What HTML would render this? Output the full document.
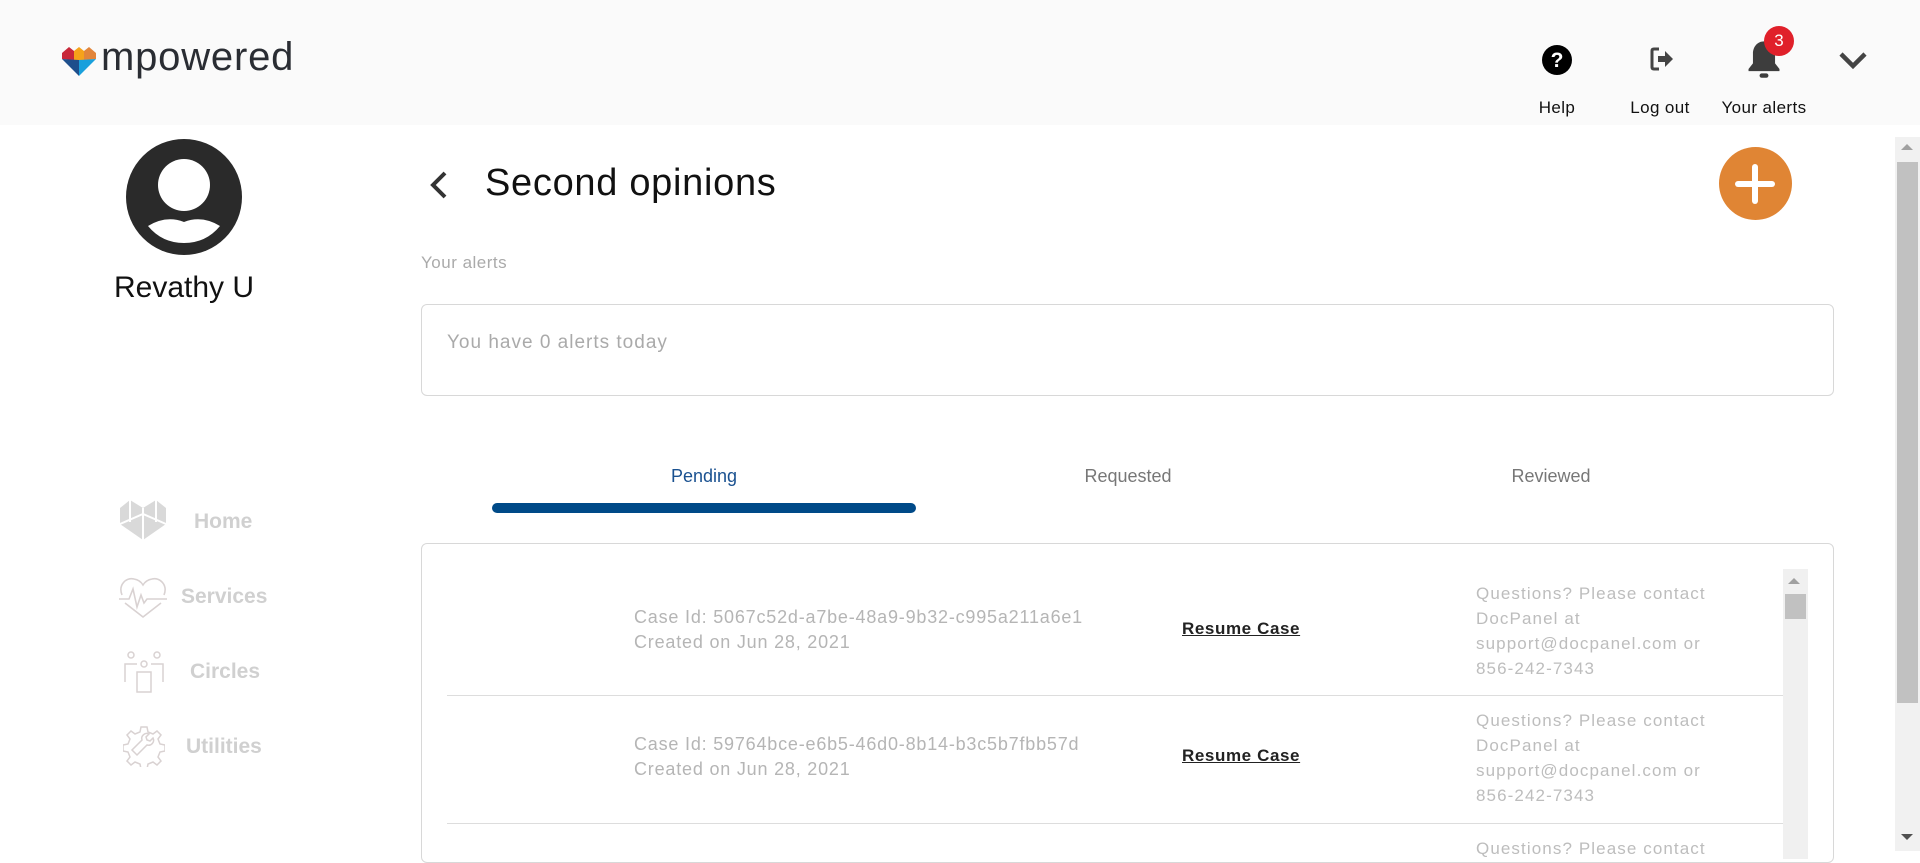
<!DOCTYPE html>
<html><head><meta charset="utf-8"><style>
*{margin:0;padding:0;box-sizing:border-box}
body{width:1920px;height:851px;overflow:hidden;background:#fff;font-family:"Liberation Sans",sans-serif;position:relative}
.abs{position:absolute}
header{position:absolute;left:0;top:0;width:1920px;height:125px;background:#fafafa}
.hl{position:absolute;top:98px;font-size:17px;color:#111;transform:translateX(-50%);letter-spacing:0.4px}
.nav{position:absolute;font-size:21px;font-weight:bold;color:#d0d0d0}
.case{position:absolute;left:634px;font-size:18px;color:#b5b5b5;line-height:25px;letter-spacing:0.8px}
.res{position:absolute;left:1182px;font-size:17px;font-weight:bold;color:#222;text-decoration:underline;letter-spacing:0.6px}
.q{position:absolute;left:1476px;font-size:17px;color:#bdbdbd;line-height:25px;letter-spacing:1.1px}
.div{position:absolute;left:447px;width:1336px;height:1px;background:#ddd}
</style></head><body>
<header>
<svg class="abs" style="left:62px;top:47px" width="34" height="30" viewBox="0 0 34 30">
<polygon points="0,6 7,0 12,4 12,13 0,12" fill="#c8283a"/>
<polygon points="12,4 17,0 22,4 22,13 12,13" fill="#f6a21a"/>
<polygon points="22,4 27,0 34,6 34,12 22,13" fill="#e2853a"/>
<polygon points="0,12 17,13 17,29" fill="#1e4f8c"/>
<polygon points="17,13 34,12 17,29" fill="#1aa0dc"/>
</svg>
<div class="abs" style="left:101px;top:35px;font-size:40px;color:#2a2d33;letter-spacing:0.8px;font-weight:500">mpowered</div>
<svg class="abs" style="left:1541px;top:44px" width="32" height="32" viewBox="0 0 32 32"><circle cx="16" cy="16" r="15" fill="#000"/><text x="16" y="23" text-anchor="middle" font-family="Liberation Sans" font-weight="bold" font-size="21" fill="#fff">?</text></svg>
<div class="hl" style="left:1557px">Help</div>
<svg class="abs" style="left:1649px;top:46px" width="26" height="26" viewBox="0 0 26 26"><path d="M10 3H5Q3 3 3 5v16q0 2 2 2h5" stroke="#444" stroke-width="3" fill="none"/><path d="M9 10h7V5l8 8-8 8v-5H9z" fill="#444"/></svg>
<div class="hl" style="left:1660px">Log out</div>
<svg class="abs" style="left:1746px;top:38px" width="36" height="42" viewBox="0 0 32 38"><path d="M16 3c-6 0-10 5-10 11v9l-4 5v2h28v-2l-4-5v-9C26 8 22 3 16 3z" fill="#3d3d3d"/><rect x="12" y="32" width="8" height="4" rx="2" fill="#3d3d3d"/></svg>
<div class="abs" style="left:1764px;top:26px;width:30px;height:30px;border-radius:50%;background:#e0202a;color:#fff;font-size:17px;text-align:center;line-height:30px">3</div>
<div class="hl" style="left:1764px">Your alerts</div>
<svg class="abs" style="left:1838px;top:50px" width="30" height="20" viewBox="0 0 30 20"><path d="M3 4l12 12L27 4" stroke="#444" stroke-width="4.5" fill="none"/></svg>
</header>

<svg class="abs" style="left:126px;top:139px" width="116" height="116" viewBox="0 0 116 116"><circle cx="58" cy="58" r="58" fill="#2a2a2a"/><circle cx="58" cy="46" r="26" fill="#fff"/><path d="M22 87Q40 76 58 83Q76 76 94 87Q80 104 58 104Q36 104 22 87z" fill="#fff"/></svg>
<div class="abs" style="left:84px;top:271px;width:200px;text-align:center;font-size:30px;color:#111">Revathy U</div>

<svg class="abs" style="left:118px;top:498px" width="50" height="44" viewBox="0 0 50 44"><path d="M2 10L12 2 25 10 38 2 48 10V26L25 42 2 26z" fill="#d9d9d9"/><path d="M25 10V42M12 2V24M38 2V24M2 26l23-10 23 10" stroke="#fff" stroke-width="2" fill="none"/></svg>
<div class="nav" style="left:194px;top:510px">Home</div>
<svg class="abs" style="left:118px;top:575px" width="50" height="44" viewBox="0 0 50 44"><path d="M4 20C0 10 8 2 16 4q6 1 9 6 3-5 9-6c8-2 16 6 12 16" stroke="#d9d2d2" stroke-width="1.6" fill="none"/><path d="M1 24h10l4-10 4 18 4-12 3 8 3-4h20" stroke="#d9d2d2" stroke-width="1.6" fill="none"/><path d="M7 28l18 14 18-14" stroke="#d9d2d2" stroke-width="1.6" fill="none"/></svg>
<div class="nav" style="left:181px;top:585px">Services</div>
<svg class="abs" style="left:122px;top:650px" width="44" height="44" viewBox="0 0 44 44"><g stroke="#d9d2d2" stroke-width="1.5" fill="none"><circle cx="9" cy="5" r="3"/><circle cx="35" cy="5" r="3"/><circle cx="22" cy="14" r="3"/><path d="M3 32V14h12M41 32V14H29M15 42V22h14v20z"/></g></svg>
<div class="nav" style="left:190px;top:660px">Circles</div>
<svg class="abs" style="left:123px;top:725px" width="42" height="42" viewBox="0 0 42 42"><g stroke="#d9d2d2" stroke-width="1.5" fill="none"><path d="M18 2h6l1 5 5 2 4-3 4 4-3 4 2 5 5 1v6l-5 1-2 5 3 4-4 4-4-3-5 2-1 5h-6l-1-5-5-2-4 3-4-4 3-4-2-5-5-1v-6l5-1 2-5-3-4 4-4 4 3 5-2z"/><path d="M14 30l10-10a5 5 0 0 0 6-7l-3 3-3-1-1-3 3-3a5 5 0 0 0-7 6L9 25z"/></g></svg>
<div class="nav" style="left:186px;top:735px">Utilities</div>

<svg class="abs" style="left:426px;top:170px" width="26" height="30" viewBox="0 0 26 30"><path d="M19 3L7 15l12 12" stroke="#333" stroke-width="4" fill="none"/></svg>
<div class="abs" style="left:485px;top:162px;font-size:38px;font-weight:500;color:#111;letter-spacing:0.7px">Second opinions</div>
<div class="abs" style="left:1719px;top:147px;width:73px;height:73px;border-radius:50%;background:#e08534"></div>
<div class="abs" style="left:1735px;top:181px;width:40px;height:6px;border-radius:3px;background:#fff"></div>
<div class="abs" style="left:1752px;top:164px;width:6px;height:40px;border-radius:3px;background:#fff"></div>

<div class="abs" style="left:421px;top:253px;font-size:17px;color:#aaa;letter-spacing:0.5px">Your alerts</div>
<div class="abs" style="left:421px;top:304px;width:1413px;height:92px;border:1px solid #d8d8d8;border-radius:6px"></div>
<div class="abs" style="left:447px;top:332px;font-size:19px;color:#aaa;letter-spacing:1px">You have 0 alerts today</div>

<div class="abs" style="left:604px;top:466px;width:200px;text-align:center;font-size:18px;color:#1a5190">Pending</div>
<div class="abs" style="left:1028px;top:466px;width:200px;text-align:center;font-size:18px;color:#777">Requested</div>
<div class="abs" style="left:1451px;top:466px;width:200px;text-align:center;font-size:18px;color:#777">Reviewed</div>
<div class="abs" style="left:492px;top:503px;width:424px;height:10px;border-radius:5px;background:#004a88"></div>

<div class="abs" style="left:421px;top:543px;width:1413px;height:320px;border:1px solid #d8d8d8;border-radius:6px"></div>
<div class="abs" style="left:1783px;top:569px;width:25px;height:290px;background:#f0f0f0"></div>
<div class="abs" style="left:1788px;top:578px;width:0;height:0;border-left:6px solid transparent;border-right:6px solid transparent;border-bottom:6px solid #a0a0a0"></div>
<div class="abs" style="left:1785px;top:594px;width:21px;height:25px;background:#c1c1c1"></div>

<div class="case" style="top:605px">Case Id: 5067c52d-a7be-48a9-9b32-c995a211a6e1<br>Created on Jun 28, 2021</div>
<div class="res" style="top:619px">Resume Case</div>
<div class="q" style="top:581px">Questions? Please contact<br>DocPanel at<br>support@docpanel.com or<br>856-242-7343</div>
<div class="div" style="top:695px"></div>
<div class="case" style="top:732px">Case Id: 59764bce-e6b5-46d0-8b14-b3c5b7fbb57d<br>Created on Jun 28, 2021</div>
<div class="res" style="top:746px">Resume Case</div>
<div class="q" style="top:708px">Questions? Please contact<br>DocPanel at<br>support@docpanel.com or<br>856-242-7343</div>
<div class="div" style="top:823px"></div>
<div class="q" style="top:836px">Questions? Please contact</div>

<div class="abs" style="left:1895px;top:137px;width:25px;height:714px;background:#f1f1f1"></div>
<div class="abs" style="left:1901px;top:144px;width:0;height:0;border-left:6px solid transparent;border-right:6px solid transparent;border-bottom:6px solid #a0a0a0"></div>
<div class="abs" style="left:1897px;top:162px;width:21px;height:541px;background:#c1c1c1"></div>
<div class="abs" style="left:1901px;top:834px;width:0;height:0;border-left:6px solid transparent;border-right:6px solid transparent;border-top:6px solid #505050"></div>
</body></html>
